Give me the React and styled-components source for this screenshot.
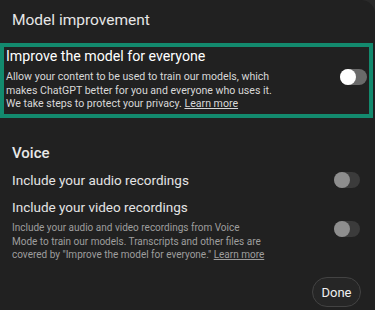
import styled, { createGlobalStyle } from "styled-components";

const GlobalStyle = createGlobalStyle`
  html, body {
    margin: 0;
    padding: 0;
    background: #2a2a2a;
  }
  * {
    box-sizing: border-box;
  }
`;

const Panel = styled.div`
  width: 375px;
  height: 310px;
  background: #212121;
  border-top-right-radius: 14px;
  font-family: Roboto, "Noto Sans", sans-serif;
  color: #ececec;
  overflow: hidden;
  display: flex;
  flex-direction: column;
`;

const Header = styled.h2`
  margin: 0;
  height: 43px;
  padding: 9px 12px 0;
  font-size: 15.5px;
  font-weight: 400;
  line-height: 22px;
  color: #e6e6e6;
`;

const Highlight = styled.section`
  margin-right: 2px;
  border: 4px solid #138a6e;
  padding: 0 2px 3.5px 2px;
  display: flex;
  align-items: center;
  justify-content: space-between;
`;

const Content = styled.div`
  flex: 1;
`;

const RowTitle = styled.div`
  font-size: ${(p) => p.size || 13.5}px;
  line-height: ${(p) => p.lh || 18}px;
  color: ${(p) => p.color || "#e4e4e4"};
`;

const Desc = styled.p`
  margin: ${(p) => p.mt || 0}px 0 0;
  font-size: ${(p) => p.size || 10.6}px;
  line-height: 13.5px;
  color: ${(p) => p.color || "#cfcfcf"};
`;

const Link = styled.a`
  color: inherit;
  text-decoration: underline;
`;

const Section = styled.section`
  padding: 25px 15px 0 12px;
`;

const SectionTitle = styled.h3`
  margin: 0 0 8px;
  font-size: 15px;
  font-weight: 500;
  line-height: 20px;
  color: #e8e8e8;
`;

const Row = styled.div`
  display: flex;
  align-items: ${(p) => (p.top ? "flex-start" : "center")};
  justify-content: space-between;
  margin-bottom: ${(p) => p.mb || 0}px;
`;

const Toggle = styled.span`
  flex: none;
  position: relative;
  width: ${(p) => (p.disabled ? 26 : 27)}px;
  height: 16px;
  border-radius: 8px;
  background: ${(p) => (p.disabled ? "#3b3b3b" : "#6a6a6a")};
  margin-top: ${(p) => p.mt || 0}px;
  &::after {
    content: "";
    position: absolute;
    left: 0;
    top: 0;
    width: 16px;
    height: 16px;
    border-radius: 50%;
    background: ${(p) => (p.disabled ? "#8e8e8e" : "#ffffff")};
  }
`;

const Footer = styled.div`
  margin-top: auto;
  display: flex;
  justify-content: flex-end;
  padding: 0 14px 3px;
`;

const DoneButton = styled.button`
  height: 30px;
  width: 49px;
  padding: 0;
  border-radius: 15px;
  border: 1px solid #434343;
  background: #262626;
  color: #f0f0f0;
  font-family: inherit;
  font-size: 13px;
  cursor: pointer;
`;

export default function App() {
  return (
    <>
      <GlobalStyle />
      <Panel>
        <Header>Model improvement</Header>
        <Highlight>
          <Content>
            <RowTitle size={14.2} color="#ffffff">
              Improve the model for everyone
            </RowTitle>
            <Desc mt={5} color="#d8d8d8">
              Allow your content to be used to train our models, which
              <br />
              makes ChatGPT better for you and everyone who uses it.
              <br />
              We take steps to protect your privacy. <Link>Learn more</Link>
            </Desc>
          </Content>
          <Toggle mt={-3} />
        </Highlight>
        <Section>
          <SectionTitle>Voice</SectionTitle>
          <Row mb={9}>
            <RowTitle>Include your audio recordings</RowTitle>
            <Toggle disabled />
          </Row>
          <Row top>
            <Content>
              <RowTitle>Include your video recordings</RowTitle>
              <Desc mt={5} size={10} color="#9e9e9e">
                Include your audio and video recordings from Voice
                <br />
                Mode to train our models. Transcripts and other files are
                <br />
                covered by "Improve the model for everyone."{" "}
                <Link>Learn more</Link>
              </Desc>
            </Content>
            <Toggle disabled mt={23} />
          </Row>
        </Section>
        <Footer>
          <DoneButton>Done</DoneButton>
        </Footer>
      </Panel>
    </>
  );
}
